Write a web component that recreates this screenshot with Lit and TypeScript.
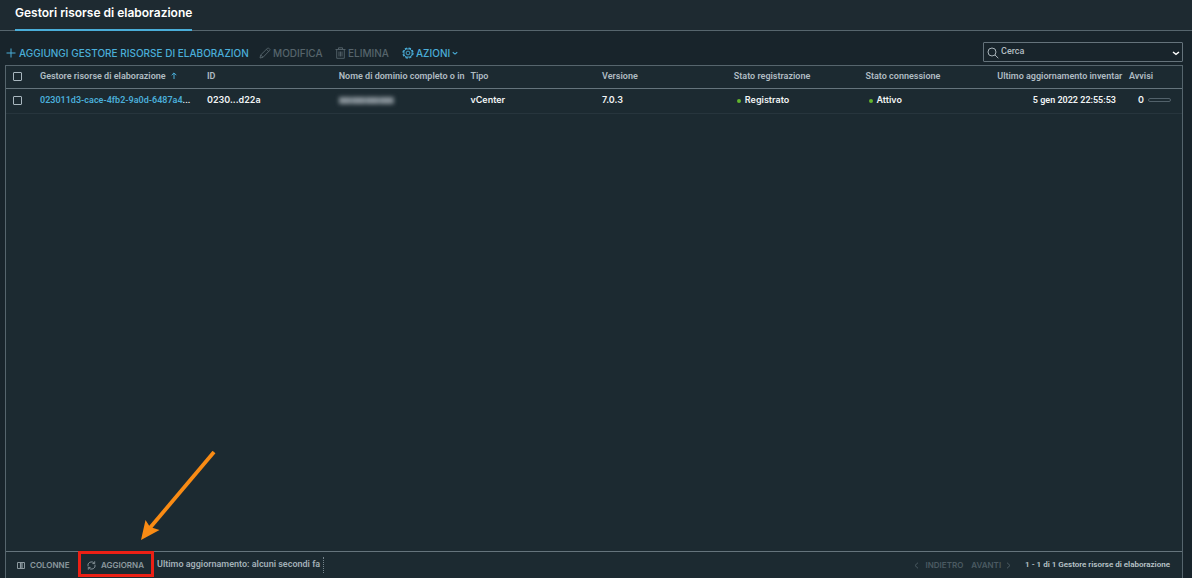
import { LitElement, html, css, svg } from "lit";
import { customElement } from "lit/decorators.js";

@customElement("app-root")
export class AppRoot extends LitElement {
  static styles = css`
    :host {
      display: flex;
      flex-direction: column;
      height: 100vh;
      overflow: hidden;
      box-sizing: border-box;
      background: #18242b;
      color: #f1f4f5;
      font: 600 9px/12px Inter, "Open Sans", sans-serif;
    }
    * { box-sizing: border-box; }
    svg { display: block; flex: none; fill: none; stroke: currentColor; }
    button {
      display: flex;
      align-items: center;
      padding: 0;
      border: 0;
      background: none;
      color: inherit;
      font: inherit;
      white-space: nowrap;
    }
    .tabs {
      display: flex;
      flex: none;
      height: 31px;
      padding-left: 15px;
      background: #1e2a31;
      border-bottom: 1px solid #56656d;
    }
    .tab {
      height: 31px;
      padding-bottom: 3px;
      border-bottom: 2px solid #4aaed9;
      color: #fff;
      font-size: 12px;
      text-decoration: none;
      line-height: 26px;
    }
    .toolbar {
      display: flex;
      flex: none;
      align-items: center;
      height: 34px;
      padding: 9px 9px 0 6px;
    }
    .actions { display: flex; align-items: center; flex: 1; font-size: 10px; font-weight: 500; }
    .add, .more { color: #4aaed9; }
    .add { width: 240px; gap: 3px; margin-right: 13px; }
    .edit { width: 64px; gap: 2px; margin-right: 12px; color: #56646c; }
    .delete { width: 55px; gap: 2px; margin-right: 12px; color: #56646c; }
    .more { gap: 2px; }
    .search {
      display: flex;
      align-items: center;
      width: 200px;
      height: 20px;
      margin-bottom: 1px;
      padding: 0 2px 0 3px;
      border: 1px solid #65737b;
      border-radius: 1px;
      color: #a6b1b7;
    }
    .search svg { margin-top: 2px; }
    .field {
      flex: 1;
      min-width: 0;
      height: 14px;
      margin-bottom: 3px;
      padding: 0 2px;
      border: 0;
      outline: 0;
      background: none;
      color: inherit;
      font: 500 9px/12px Roboto, sans-serif;
    }
    .field::placeholder { color: #b3bdc2; opacity: 1; }
    .toggle { color: #fff; }
    .panel {
      display: flex;
      flex-direction: column;
      flex: 1;
      min-height: 0;
      margin: 0 9px 0 5px;
      background: #1c2a31;
      border: 1px solid #56656d;
      border-bottom: 0;
    }
    .grid { flex: 1; min-height: 0; }
    table { width: 100%; table-layout: fixed; border-collapse: separate; border-spacing: 0; }
    .c-check { width: 27px; }
    .c-name { width: 167px; }
    .c-alerts { width: 60px; }
    th, td {
      padding: 0 0 2px 7px;
      text-align: left;
      white-space: nowrap;
    }
    th {
      height: 23px;
      border-bottom: 1px solid #65747c;
      color: #b0bcc3;
      font: 600 9px/12px Roboto, sans-serif;
    }
    td { height: 25px; border-bottom: 1px solid #27353d; }
    .date { padding-right: 6px; text-align: right; font-family: Roboto, sans-serif; }
    .sort { display: inline-block; margin-left: 5px; color: #4aaed9; }
    .link { color: #4aaed9; text-decoration: none; }
    .id-cell { font-family: Roboto, sans-serif; }
    .check {
      display: block;
      appearance: none;
      width: 9px;
      height: 9px;
      margin: 0;
      border: 1px solid #a9b7bf;
      border-radius: 1px;
    }
    .status { display: flex; align-items: center; gap: 4px; padding-left: 3px; }
    .dot { width: 4px; height: 4px; margin-top: 2px; border-radius: 50%; background: #62b52e; }
    .alerts { display: flex; align-items: center; gap: 4px; padding-left: 9px; }
    .bar { width: 23px; height: 4px; border: 1px solid #52616a; border-radius: 2px; }
    .masked {
      display: block;
      width: 55px;
      height: 7px;
      background: repeating-linear-gradient(90deg, #89939a 0 10px, #78848b 12px 14px);
      filter: blur(2px);
    }
    .footer {
      display: flex;
      flex: none;
      align-items: center;
      height: 27px;
      padding: 0 12px 0 11px;
      border-top: 1px solid #65747c;
      color: #8c999f;
      font-size: 8px;
    }
    .columns { width: 61px; gap: 5px; }
    .refresh-wrap { position: relative; display: flex; height: 26px; }
    .refresh { width: 76px; padding-left: 9px; gap: 5px; }
    .highlight {
      position: absolute;
      inset: -1px 0 1px 0;
      border: 3px solid #ec2015;
      pointer-events: none;
    }
    .arrow { position: absolute; left: 61px; bottom: 37px; pointer-events: none; }
    .updated {
      height: 16px;
      padding: 0 3px;
      border-right: 1px dotted #75838b;
      color: #a2b0b7;
      font: 600 9px/14px Roboto, sans-serif;
      white-space: nowrap;
    }
    .pager { display: flex; align-items: center; gap: 8px; margin-left: auto; color: #4b5a62; }
    .pager button { gap: 7px; }
    .pager .next { gap: 5px; }
    .count { margin-left: 6px; color: #bac5ca; font-family: Roboto, sans-serif; white-space: nowrap; }
  `;

  private columns = [
    "ID",
    "Nome di dominio completo o in",
    "Tipo",
    "Versione",
    "Stato registrazione",
    "Stato connessione",
    "Ultimo aggiornamento inventar",
  ];

  private caret(size: number) {
    return svg`<svg width=${size} height=${size} viewBox="0 0 8 8" stroke-width="1.4"><path d="M1 3l3 2.4L7 3"/></svg>`;
  }

  private status(text: string) {
    return html`<span class="status"><span class="dot"></span>${text}</span>`;
  }

  render() {
    return html`
      <nav class="tabs"><a class="tab" href="#">Gestori risorse di elaborazione</a></nav>
      <div class="toolbar">
        <div class="actions">
          <button class="add">
            <svg width="10" height="10" viewBox="0 0 10 10"><path d="M5 .5v9M.5 5h9"/></svg>
            AGGIUNGI GESTORE RISORSE DI ELABORAZION
          </button>
          <button class="edit" disabled>
            <svg width="12" height="12" viewBox="0 0 12 12" stroke-width=".9" stroke-linejoin="round">
              <path d="M1 11l.7-3L8.6 1.1q.5-.5 1 0l1.2 1.2q.5.5 0 1L4 10.3zM7.5 2.3l2.2 2.2M1.8 8l2.1 2.2"/>
            </svg>
            MODIFICA
          </button>
          <button class="delete" disabled>
            <svg width="11" height="12" viewBox="0 0 11 12" stroke-width=".9">
              <path d="M.5 2.5h10M3.5 2.3V.8h4v1.5M1.7 2.5v8.8h7.6V2.5M4 4.5v5M5.5 4.5v5M7 4.5v5"/>
            </svg>
            ELIMINA
          </button>
          <button class="more">
            <svg width="12" height="12" viewBox="0 0 12 12">
              <circle cx="6" cy="6" r="5" stroke-width="1.3" stroke-dasharray="2.4 1.53"/>
              <circle cx="6" cy="6" r="4.1" stroke-width=".9"/>
              <circle cx="6" cy="6" r="1.9" stroke-width=".9"/>
            </svg>
            AZIONI ${this.caret(6)}
          </button>
        </div>
        <div class="search">
          <svg width="12" height="12" viewBox="0 0 12 12"><circle cx="5" cy="5" r="4"/><path d="M8 8l3.3 3.2"/></svg>
          <input class="field" type="text" placeholder="Cerca" aria-label="Cerca" />
          <button class="toggle" aria-label="Filtri">${this.caret(8)}</button>
        </div>
      </div>
      <main class="panel">
        <div class="grid">
          <table>
            <colgroup>
              <col class="c-check" /><col class="c-name" />
              ${this.columns.map(() => html`<col />`)}
              <col class="c-alerts" />
            </colgroup>
            <thead>
              <tr>
                <th><input class="check" type="checkbox" aria-label="Seleziona tutto" /></th>
                <th>
                  Gestore risorse di elaborazione<svg class="sort" width="6" height="7" viewBox="0 0 6 7"><path d="M3 7V1M.7 3.2L3 .9l2.3 2.3"/></svg>
                </th>
                ${this.columns.map((c) => html`<th>${c}</th>`)}
                <th>Avvisi</th>
              </tr>
            </thead>
            <tbody>
              <tr>
                <td><input class="check" type="checkbox" aria-label="Seleziona riga" /></td>
                <td class="id-cell"><a class="link" href="#">023011d3-cace-4fb2-9a0d-6487a4</a>...</td>
                <td>0230...d22a</td>
                <td><span class="masked"></span></td>
                <td>vCenter</td>
                <td>7.0.3</td>
                <td>${this.status("Registrato")}</td>
                <td>${this.status("Attivo")}</td>
                <td class="date">5 gen 2022 22:55:53</td>
                <td><span class="alerts">0<span class="bar"></span></span></td>
              </tr>
            </tbody>
          </table>
        </div>
        <footer class="footer">
          <button class="columns">
            <svg width="8" height="7" viewBox="0 0 8 7"><path d="M.5.5h7v6h-7z"/><path d="M3.500 1v5M5 1v5" stroke-width="1.2"/></svg>
            COLONNE
          </button>
          <div class="refresh-wrap">
            <button class="refresh">
              <svg width="9" height="9" viewBox="0 0 9 9" stroke-width=".9">
                <path d="M1 5.300A3.500 3.500 0 0 1 7.200 2.300M7.700.3v2.300H5.400M8 3.700A3.500 3.500 0 0 1 1.800 6.700M1.300 8.700V6.400h2.300"/>
              </svg>
              AGGIORNA
            </button>
            <span class="highlight"></span>
            <svg class="arrow" width="77" height="90" viewBox="0 0 77 90">
              <path d="M75 1L10 78" stroke="#f98b14" stroke-width="3.8"/>
              <path d="M2 89L6.500 69l4.500 7 9.500 3z" fill="#f98b14" stroke="none"/>
            </svg>
          </div>
          <span class="updated">Ultimo aggiornamento: alcuni secondi fa</span>
          <div class="pager">
            <button disabled>
              <svg width="5" height="7" viewBox="0 0 5 7"><path d="M4 .7L1 3.500 4 6.300"/></svg>INDIETRO
            </button>
            <button class="next" disabled>
              AVANTI<svg width="5" height="7" viewBox="0 0 5 7"><path d="M1 .7l3 2.800-3 2.800"/></svg>
            </button>
            <span class="count">1 - 1 di 1 Gestore risorse di elaborazione</span>
          </div>
        </footer>
      </main>
    `;
  }
}
